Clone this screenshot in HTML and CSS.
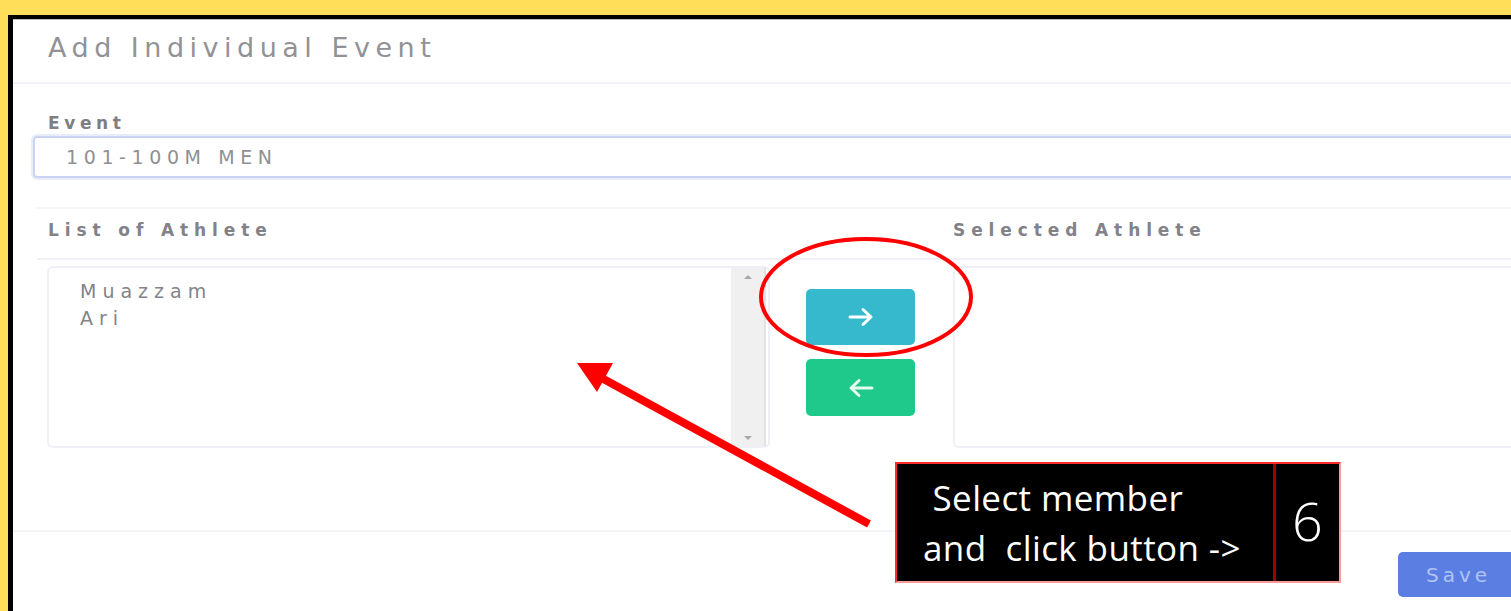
FILE: index.html
```html
<!DOCTYPE html>
<html lang="en">
<head>
<meta charset="utf-8">
<title>Add Individual Event</title>
<link rel="stylesheet" href="styles.css">
</head>
<body>
<div class="frame">
  <div class="modal">
    <div class="modal-header">
      <h1 class="modal-title">Add Individual Event</h1>
    </div>
    <div class="modal-body">
      <label class="field-label">Event</label>
      <div class="select-input">101-100M MEN</div>
      <div class="transfer-head">
        <div class="head-left">List of Athlete</div>
        <div class="head-right">Selected Athlete</div>
      </div>
      <div class="transfer">
        <div class="list-box list-left">
          <ul class="list-items">
            <li>Muazzam</li>
            <li>Ari</li>
          </ul>
          <div class="scrollbar">
            <span class="sb-up"></span>
            <span class="sb-down"></span>
          </div>
        </div>
        <div class="actions">
          <button class="btn btn-info" type="button">
            <svg width="26" height="20" viewBox="0 0 26 20"><path d="M2 10h21M15 2.5l8 7.5-8 7.5" fill="none" stroke="#fff" stroke-width="3" stroke-linecap="round" stroke-linejoin="round"/></svg>
          </button>
          <button class="btn btn-success" type="button">
            <svg width="26" height="20" viewBox="0 0 26 20"><path d="M24 10H3M11 2.5L3 10l8 7.5" fill="none" stroke="#e6fbf2" stroke-width="3" stroke-linecap="round" stroke-linejoin="round"/></svg>
          </button>
        </div>
        <div class="list-box list-right"></div>
      </div>
    </div>
    <div class="modal-footer">
      <button class="btn-save" type="button">Save</button>
    </div>
  </div>

  <svg class="marks" width="1511" height="611" viewBox="0 0 1511 611">
    <ellipse cx="866" cy="297" rx="105" ry="58" fill="none" stroke="#ff0000" stroke-width="4"/>
    <line x1="869" y1="524" x2="598" y2="376" stroke="#ff0000" stroke-width="8"/>
    <polygon points="577,363 613,363 597,392" fill="#ff0000"/>
  </svg>

  <div class="callout">
    <div class="callout-text">&nbsp;Select member<br>and&nbsp; click button -&gt;</div>
    <div class="callout-step">6</div>
  </div>
</div>
</body>
</html>
```
FILE: styles.css
```css
html, body {
  margin: 0;
  padding: 0;
  overflow: hidden;
}

body {
  background: #ffde59;
  width: 1511px;
  height: 611px;
}

.frame {
  position: relative;
  width: 1511px;
  height: 611px;
  padding: 15px 0 0 8px;
  box-sizing: border-box;
  overflow: hidden;
}

.modal {
  width: 1600px;
  height: 620px;
  background: #fff;
  border-left: 5px solid #000;
  border-top: 4px solid #000;
  box-shadow: inset 0 1px 0 #bcbcbc;
  font-family: "DejaVu Sans", sans-serif;
  color: #8a8a8e;
}

.modal-header {
  height: 63px;
  padding-left: 35px;
  border-bottom: 2px solid #f1f3f8;
  display: flex;
  align-items: center;
}

.modal-title {
  margin: 0 0 6px;
  font-weight: normal;
  font-size: 27px;
  letter-spacing: 5.5px;
  color: #929296;
}

.modal-body {
  padding: 29px 0 0 20px;
}

.field-label {
  display: block;
  margin-left: 15px;
  font-size: 17px;
  font-weight: bold;
  letter-spacing: 4.6px;
  color: #7e7e84;
  line-height: 20px;
}

.select-input {
  margin-top: 3px;
  height: 38px;
  border: 2px solid #c9d3f2;
  box-shadow: 0 0 0 2px #e9edfb;
  border-radius: 4px;
  padding-left: 31px;
  display: flex;
  align-items: center;
  font-size: 19px;
  letter-spacing: 5.6px;
  color: #909094;
}

.transfer-head {
  margin-top: 29px;
  margin-left: 4px;
  height: 42px;
  padding-bottom: 7px;
  border-top: 2px solid #f3f4f7;
  border-bottom: 2px solid #eff1f6;
  display: flex;
  align-items: center;
  font-size: 17px;
  font-weight: bold;
  letter-spacing: 5.9px;
  color: #828288;
}

.head-left {
  width: 916px;
  padding-left: 11px;
  box-sizing: border-box;
}

.transfer {
  display: flex;
  margin-top: 6px;
  margin-left: 14px;
}

.list-box {
  height: 182px;
  border: 2px solid #eef0f5;
  border-radius: 6px;
  box-sizing: border-box;
  background: #fff;
}

.list-left {
  width: 723px;
  display: flex;
  justify-content: space-between;
}

.list-right {
  width: 600px;
}

.list-items {
  list-style: none;
  margin: 0;
  padding: 10px 0 0 31px;
  font-size: 19px;
  line-height: 27px;
  letter-spacing: 6px;
  color: #838388;
}

.scrollbar {
  width: 35px;
  margin: 0 2px 0 0;
  background: #f0f0f0;
  border-right: 2px solid #e2e2e6;
  display: flex;
  flex-direction: column;
  justify-content: space-between;
  align-items: center;
  padding: 7px 0 6px;
  box-sizing: border-box;
}

.sb-up, .sb-down {
  width: 0;
  height: 0;
  border-left: 4px solid transparent;
  border-right: 4px solid transparent;
}

.sb-up {
  border-bottom: 4px solid #a8a8a8;
}

.sb-down {
  border-top: 4px solid #a8a8a8;
}

.actions {
  width: 183px;
  display: flex;
  flex-direction: column;
  align-items: flex-start;
  padding: 23px 0 0 36px;
  box-sizing: border-box;
  gap: 14px;
}

.btn {
  width: 109px;
  height: 56px;
  border: none;
  border-radius: 5px;
  display: flex;
  align-items: center;
  justify-content: center;
  padding: 0;
}

.btn-info {
  background: #36b9cc;
}

.btn-success {
  background: #1ec98b;
  height: 57px;
}

.modal-footer {
  margin-top: 82px;
  border-top: 2px solid #f3f4f8;
  padding: 20px 0 0 1385px;
}

.btn-save {
  width: 130px;
  height: 45px;
  border: none;
  border-radius: 5px;
  background: #5b7ee3;
  color: #b0c4f3;
  font-family: "DejaVu Sans", sans-serif;
  font-size: 20px;
  letter-spacing: 4px;
  text-align: left;
  padding-left: 28px;
}

/* annotation layer */
.marks {
  position: absolute;
  left: 0;
  top: 0;
  pointer-events: none;
}

.callout {
  position: absolute;
  left: 895px;
  top: 462px;
  width: 446px;
  height: 121px;
  box-sizing: border-box;
  background: #000;
  border: 2px solid #ff2a2a;
  border-bottom-color: #ff9a9a;
  border-right-color: #ff9a9a;
  display: flex;
  font-family: "Open Sans", sans-serif;
  color: #fff;
}

.callout-text {
  width: 379px;
  border-right: 3px solid #a00000;
  padding: 9px 0 0 26px;
  box-sizing: border-box;
  font-size: 35px;
  line-height: 50px;
  letter-spacing: 0.4px;
}

.callout-step {
  flex: 1;
  display: flex;
  align-items: center;
  justify-content: center;
  font-size: 54px;
  font-weight: 300;
  padding-bottom: 6px;
}
```
